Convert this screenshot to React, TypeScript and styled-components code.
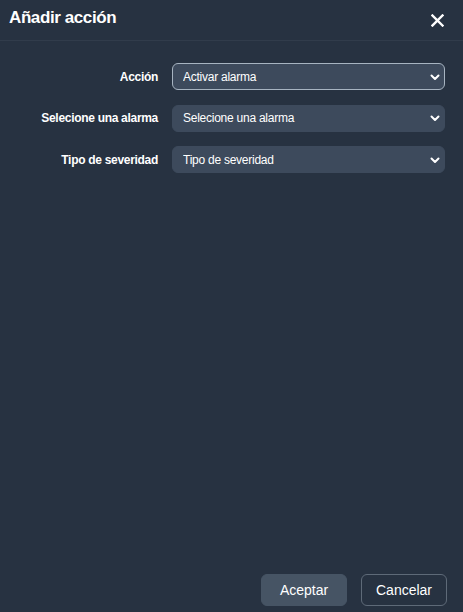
import React from 'react';
import styled, { createGlobalStyle } from 'styled-components';

const GlobalStyle = createGlobalStyle`
	html, body, #root {
		margin: 0;
		height: 100%;
	}
	body {
		background-color: #273241;
		font-family: "Liberation Sans", Arial, sans-serif;
	}
`;

const StyledModal = styled.div`
	display: flex;
	flex-direction: column;
	height: 100vh;
	box-sizing: border-box;
	background-color: #273241;
	color: #ffffff;
`;

const ModalHeader = styled.div`
	display: flex;
	align-items: center;
	justify-content: space-between;
	height: 41px;
	box-sizing: border-box;
	padding: 0 18px 4px 9px;
	border-bottom: 1px solid #313c4b;

	.modal__title {
		margin: 0;
		font-size: 17px;
		font-weight: bold;
		letter-spacing: -0.4px;
		color: #ffffff;
	}
`;

const CloseButton = styled.button`
	display: flex;
	align-items: center;
	justify-content: center;
	width: 16px;
	height: 16px;
	padding: 0;
	border: none;
	background: none;
	cursor: pointer;
	margin-top: 4px;
`;

const ModalBody = styled.div`
	flex: 1;
	display: flex;
	flex-direction: column;
	gap: 14.5px;
	padding: 22px 18px 0 0;
`;

const FieldRow = styled.div`
	display: grid;
	grid-template-columns: 158px 1fr;
	column-gap: 14px;
	align-items: center;

	.field__label {
		text-align: right;
		font-size: 12px;
		font-weight: bold;
		letter-spacing: -0.3px;
		color: #ffffff;
	}
`;

const SelectWrap = styled.div`
	position: relative;

	svg {
		position: absolute;
		right: 4px;
		top: 50%;
		transform: translateY(-50%);
		pointer-events: none;
	}
`;

const Select = styled.select<{ $focused?: boolean }>`
	appearance: none;
	width: 100%;
	height: 27px;
	box-sizing: border-box;
	padding: 0 24px 0 10px;
	border-radius: 6px;
	border: 1px solid ${({ $focused }) => ($focused ? '#a7b4c1' : '#3d4a5c')};
	background-color: #3d4a5c;
	color: #ffffff;
	font-family: "Liberation Sans", Arial, sans-serif;
	font-size: 12px;
	letter-spacing: -0.25px;
	outline: none;
`;

const ModalFooter = styled.div`
	display: flex;
	justify-content: flex-end;
	gap: 14px;
	padding: 0 16px 6px 0;
`;

const FooterButton = styled.button<{ $variant: 'primary' | 'outline' }>`
	width: 86px;
	height: 32px;
	border-radius: 6px;
	font-family: "Liberation Sans", Arial, sans-serif;
	font-size: 14px;
	color: #ffffff;
	cursor: pointer;
	${({ $variant }) =>
		$variant === 'primary'
			? `
		background-color: #465464;
		border: 1px solid #465464;
	`
			: `
		background-color: transparent;
		border: 1px solid #5e6a78;
	`}
`;

const Chevron = () => (
	<svg width="12" height="12" viewBox="0 0 12 12">
		<path d="M2.5 4.5 L6 8 L9.5 4.5" fill="none" stroke="#ffffff" strokeWidth="2" strokeLinecap="round" strokeLinejoin="round" />
	</svg>
);

const fields = [
	{ label: 'Acción', value: 'Activar alarma', focused: true },
	{ label: 'Selecione una alarma', value: 'Selecione una alarma' },
	{ label: 'Tipo de severidad', value: 'Tipo de severidad' },
];

const App = (): JSX.Element => {
	return (
		<>
			<GlobalStyle />
			<StyledModal className="modal">
				<ModalHeader>
					<h2 className="modal__title">Añadir acción</h2>
					<CloseButton aria-label="Cerrar">
						<svg width="13" height="13" viewBox="0 0 13 13">
							<path d="M1.5 1.5 L11.5 11.5 M11.5 1.5 L1.5 11.5" stroke="#ffffff" strokeWidth="2.4" strokeLinecap="square" />
						</svg>
					</CloseButton>
				</ModalHeader>
				<ModalBody>
					{fields.map((field) => (
						<FieldRow key={field.label}>
							<span className="field__label">{field.label}</span>
							<SelectWrap>
								<Select $focused={field.focused} defaultValue={field.value}>
									<option>{field.value}</option>
								</Select>
								<Chevron />
							</SelectWrap>
						</FieldRow>
					))}
				</ModalBody>
				<ModalFooter>
					<FooterButton $variant="primary">Aceptar</FooterButton>
					<FooterButton $variant="outline">Cancelar</FooterButton>
				</ModalFooter>
			</StyledModal>
		</>
	);
};

export default App;
